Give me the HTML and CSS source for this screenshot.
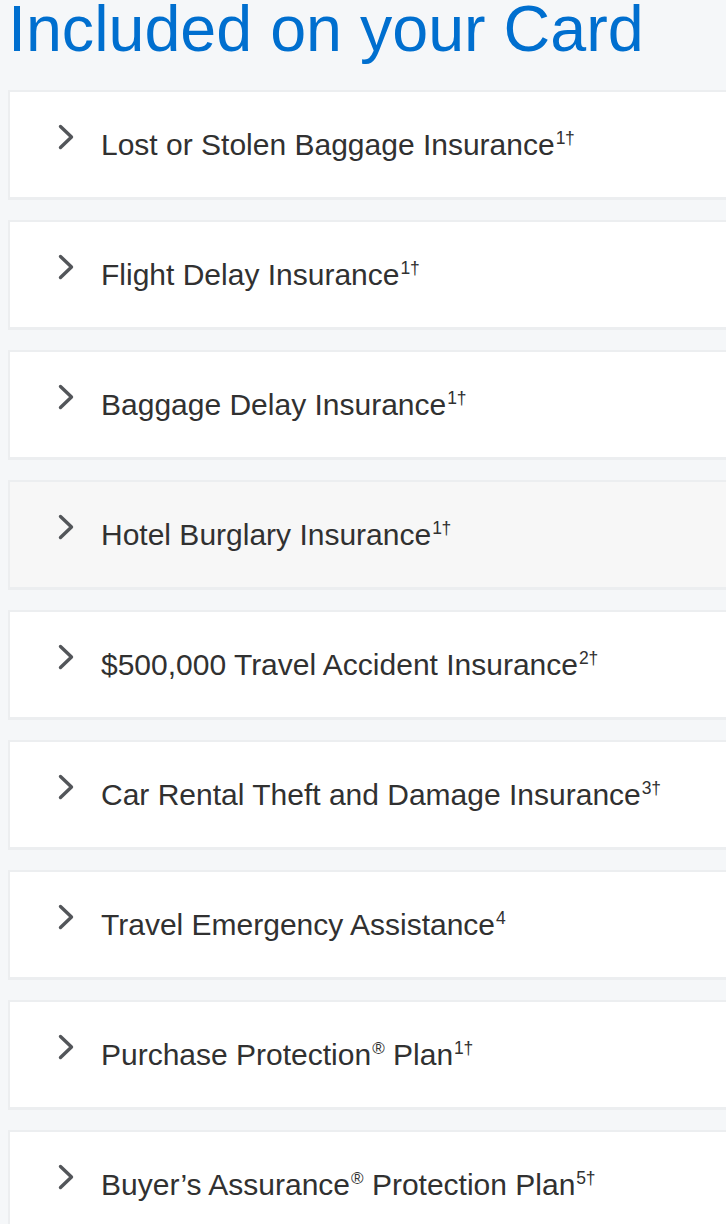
FILE: index.html
```html
<!DOCTYPE html>
<html lang="en">
<head>
<meta charset="utf-8">
<title>Included on your Card</title>
<link rel="stylesheet" href="styles.css">
</head>
<body>
<main class="page">
  <h1 class="title">Included on your Card</h1>
  <ul class="benefits">
    <li class="benefit"><svg class="chev" viewBox="0 0 16 26"><polyline points="2.5,2.5 13.5,13 2.5,23.5"/></svg><span class="label">Lost or Stolen Baggage Insurance<sup>1†</sup></span></li>
    <li class="benefit"><svg class="chev" viewBox="0 0 16 26"><polyline points="2.5,2.5 13.5,13 2.5,23.5"/></svg><span class="label">Flight Delay Insurance<sup>1†</sup></span></li>
    <li class="benefit"><svg class="chev" viewBox="0 0 16 26"><polyline points="2.5,2.5 13.5,13 2.5,23.5"/></svg><span class="label">Baggage Delay Insurance<sup>1†</sup></span></li>
    <li class="benefit is-hover"><svg class="chev" viewBox="0 0 16 26"><polyline points="2.5,2.5 13.5,13 2.5,23.5"/></svg><span class="label">Hotel Burglary Insurance<sup>1†</sup></span></li>
    <li class="benefit"><svg class="chev" viewBox="0 0 16 26"><polyline points="2.5,2.5 13.5,13 2.5,23.5"/></svg><span class="label">$500,000 Travel Accident Insurance<sup>2†</sup></span></li>
    <li class="benefit"><svg class="chev" viewBox="0 0 16 26"><polyline points="2.5,2.5 13.5,13 2.5,23.5"/></svg><span class="label">Car Rental Theft and Damage Insurance<sup>3†</sup></span></li>
    <li class="benefit"><svg class="chev" viewBox="0 0 16 26"><polyline points="2.5,2.5 13.5,13 2.5,23.5"/></svg><span class="label">Travel Emergency Assistance<sup>4</sup></span></li>
    <li class="benefit"><svg class="chev" viewBox="0 0 16 26"><polyline points="2.5,2.5 13.5,13 2.5,23.5"/></svg><span class="label">Purchase Protection<sup class="reg">®</sup> Plan<sup>1†</sup></span></li>
    <li class="benefit"><svg class="chev" viewBox="0 0 16 26"><polyline points="2.5,2.5 13.5,13 2.5,23.5"/></svg><span class="label">Buyer’s Assurance<sup class="reg">®</sup> Protection Plan<sup>5†</sup></span></li>
  </ul>
</main>
</body>
</html>
```
FILE: styles.css
```css
html, body {
  margin: 0;
  padding: 0;
  overflow-x: hidden;
}
body {
  background: #f5f7f9;
  font-family: "Liberation Sans", Arial, sans-serif;
  color: #313131;
}
.page {
  padding-left: 8px;
}
.title {
  margin: 0 0 32px 0;
  font-size: 64.6px;
  line-height: 58px;
  font-weight: normal;
  color: #006fcf;
  white-space: nowrap;
}
.benefits {
  list-style: none;
  margin: 0 -30px 0 0;
  padding: 0;
  display: flex;
  flex-direction: column;
  gap: 20px;
}
.benefit {
  display: flex;
  align-items: center;
  height: 105px;
  padding-left: 48px;
  background: #ffffff;
  border: 2px solid #eceef0;
  border-bottom-width: 3px;
  border-right: none;
}
.benefit.is-hover {
  background: #f7f7f7;
}
.chev {
  width: 16px;
  height: 26px;
  flex: none;
  margin-bottom: 15px;
  fill: none;
  stroke: #53565a;
  stroke-width: 3.4;
  stroke-linecap: round;
  stroke-linejoin: round;
}
.label {
  margin-left: 27px;
  font-size: 30px;
  line-height: 36px;
  white-space: nowrap;
}
.label sup {
  font-size: 17.5px;
  letter-spacing: -0.3px;
  vertical-align: 11px;
  line-height: 0;
  margin-left: 1px;
}
.label sup.reg {
  font-size: 17px;
  letter-spacing: 0;
  vertical-align: 11px;
  margin-left: 1px;
}
```
